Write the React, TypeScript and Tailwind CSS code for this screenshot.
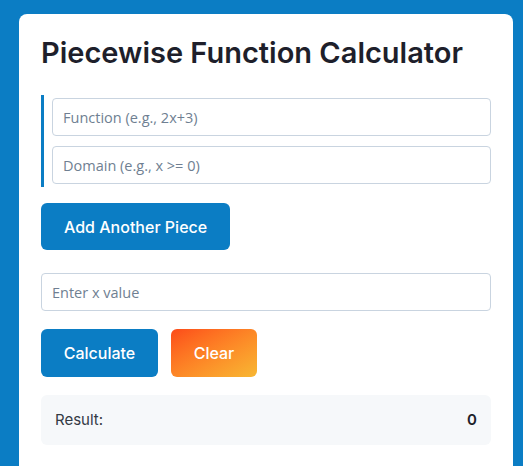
import React, { useState } from 'react';

export default function App() {
  const [x, setX] = useState('');
  const [fn, setFn] = useState('');
  const [domain, setDomain] = useState('');
  const [result] = useState('0');

  const inputCls =
    'w-full h-[38px] px-[10px] rounded-[4px] border border-[#c9d4e0] bg-white text-[14.5px] text-[#1f2937] placeholder:text-[#6f7f92] outline-none font-["Open_Sans",sans-serif]';

  return (
    <div className="min-h-screen bg-[#0b7dc4] pt-[14px] px-[19px] pr-[10px] font-['Inter',sans-serif]">
      <div className="bg-white rounded-[8px] p-[22px] pb-[40px]">
        <h1 className="text-[29px] leading-[34px] font-semibold text-[#1e1f2b] mb-[25px]">
          Piecewise Function Calculator
        </h1>

        <div className="border-l-[3px] border-[#0b7dc4] pl-[8px] py-[3px] flex flex-col gap-[10px]">
          <input
            className={inputCls}
            placeholder="Function (e.g., 2x+3)"
            value={fn}
            onChange={(e) => setFn(e.target.value)}
          />
          <input
            className={inputCls}
            placeholder="Domain (e.g., x >= 0)"
            value={domain}
            onChange={(e) => setDomain(e.target.value)}
          />
        </div>

        <button
          type="button"
          className="mt-[16px] h-[47px] px-[23px] rounded-[6px] bg-[#0b7dc4] text-white text-[16px] leading-[22px] font-medium"
        >
          Add Another Piece
        </button>

        <input
          className={inputCls + ' mt-[23px]'}
          placeholder="Enter x value"
          value={x}
          onChange={(e) => setX(e.target.value)}
        />

        <div className="flex gap-[13px] mt-[18px]">
          <button
            type="button"
            className="h-[48px] w-[117px] rounded-[6px] bg-[#0b7dc4] text-white text-[16px] leading-[22px] font-medium"
          >
            Calculate
          </button>
          <button
            type="button"
            className="h-[48px] w-[86px] rounded-[6px] bg-linear-to-br from-[#fc4a1a] to-[#f7b733] text-white text-[16px] leading-[22px] font-medium"
          >
            Clear
          </button>
        </div>

        <div className="mt-[18px] h-[50px] px-[14px] rounded-[6px] bg-[#f6f8fa] flex items-center justify-between text-[15px] text-[#333a44]">
          <span>Result:</span>
          <span className="font-semibold text-[#1e1f2b]">{result}</span>
        </div>
      </div>
    </div>
  );
}
